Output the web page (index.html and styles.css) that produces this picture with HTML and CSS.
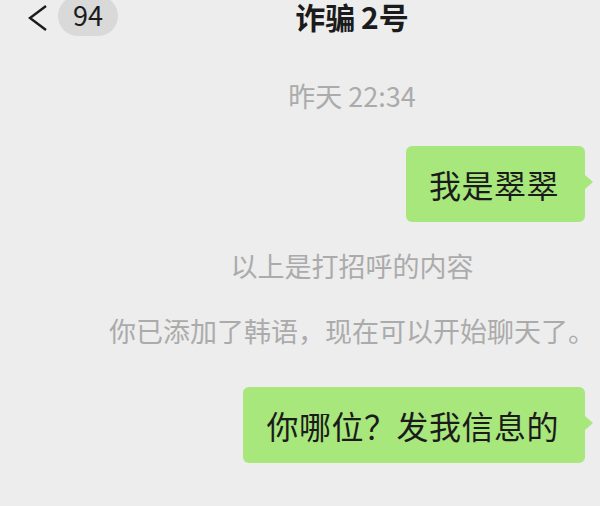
FILE: index.html
```html
<!DOCTYPE html>
<html lang="zh-CN">
<head>
    <meta charset="UTF-8">
    <meta name="viewport" content="width=device-width, initial-scale=1.0">
    <title>诈骗2号</title>
    <link rel="stylesheet" href="styles.css">
</head>
<body>
    <div class="topbar">
        <div class="nav">
            <svg class="back" width="20" height="28" viewBox="0 0 20 28">
                <polyline points="18,2 2,14 18,26" fill="none" stroke="#1b1b1b" stroke-width="2.4" stroke-linejoin="miter"/>
            </svg>
            <span class="unread">94</span>
        </div>
        <div class="title">诈骗 2号</div>
    </div>

    <div class="chat">
        <div class="time">昨天 22:34</div>

        <div class="row">
            <div class="bubble">我是翠翠</div>
        </div>

        <div class="notice first">以上是打招呼的内容</div>
        <div class="notice second">你已添加了韩语，现在可以开始聊天了。</div>

        <div class="row last">
            <div class="bubble">你哪位？发我信息的</div>
        </div>
    </div>
</body>
</html>
```

FILE: styles.css
```css
body {
    margin: 0;
    background-color: #ededed;
    font-family: "Noto Sans CJK SC", "Noto Sans", sans-serif;
    color: #1b1b1b;
    overflow: hidden;
}
.topbar {
    display: grid;
    grid-template-columns: 104px 1fr;
    height: 36px;
    align-items: center;
}
.nav {
    display: flex;
    align-items: center;
    padding-left: 28px;
    gap: 10px;
}
.back {
    display: block;
    flex-shrink: 0;
}
.unread {
    display: block;
    flex-shrink: 0;
    width: 60px;
    height: 40px;
    margin-top: -4px;
    border-radius: 20px;
    background-color: #d9d9d9;
    font-size: 27px;
    line-height: 38px;
    text-align: center;
    color: #1b1b1b;
}
.title {
    align-self: start;
    text-align: center;
    font-size: 30px;
    font-weight: 700;
    line-height: 32px;
    word-spacing: -1px;
}
.chat {
    padding-left: 104px;
}
.time {
    margin-top: 45px;
    text-align: center;
    font-size: 27px;
    line-height: 30px;
    color: #ababab;
}
.row {
    display: flex;
    justify-content: flex-end;
    padding-right: 15px;
    margin-top: 35px;
}
.row.last {
    margin-top: 41px;
}
.bubble {
    position: relative;
    background-color: #a8e77b;
    border-radius: 6px;
    padding: 22px 26px 22px 23px;
    font-size: 32px;
    line-height: 32px;
    letter-spacing: 0.5px;
    white-space: nowrap;
}
.bubble::after {
    content: "";
    position: absolute;
    right: -8px;
    top: 29px;
    border-top: 7px solid transparent;
    border-bottom: 7px solid transparent;
    border-left: 8px solid #a8e77b;
}
.notice {
    text-align: center;
    font-size: 27px;
    line-height: 30px;
    color: #ababab;
    white-space: nowrap;
}
.notice.first {
    margin-top: 29px;
}
.notice.second {
    margin-top: 35px;
}
```
